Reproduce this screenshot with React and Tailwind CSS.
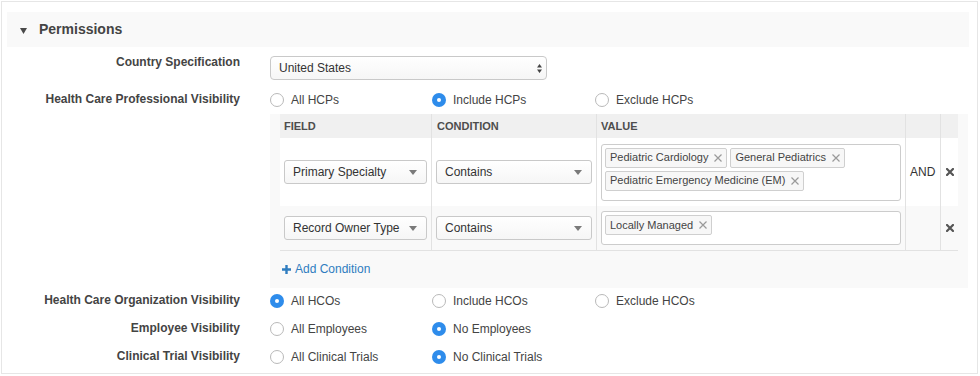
import React from "react";

const font = { fontFamily: '"Liberation Sans", Arial, Helvetica, sans-serif' };

function Radio({ checked, label, w }) {
  return (
    <div className={"flex items-center " + w}>
      {checked ? (
        <span className="w-[14px] h-[14px] rounded-full bg-[#2e8ceb] flex items-center justify-center shrink-0">
          <span className="w-[4px] h-[4px] rounded-full bg-white" />
        </span>
      ) : (
        <span className="w-[14px] h-[14px] rounded-full border border-[#b9b9b9] bg-white shrink-0" />
      )}
      <span className="ml-[7px] text-[12px] leading-[14px] text-[#444]">{label}</span>
    </div>
  );
}

function Label({ children, extra }) {
  return (
    <div className={"w-[238px] shrink-0 text-right text-[12px] leading-[14px] font-bold text-[#444] " + (extra || "")}>
      {children}
    </div>
  );
}

function Caret() {
  return (
    <svg width="8" height="5" viewBox="0 0 8 5" className="shrink-0">
      <path d="M0 0 L8 0 L4 5 Z" fill="#7a7a7a" />
    </svg>
  );
}

function Select({ text, w }) {
  return (
    <div className={"h-[24px] border border-[#c9c9c9] rounded-[3px] bg-linear-to-b from-white to-[#f6f6f6] flex items-center justify-between pl-[8px] pr-[9px] text-[12px] text-[#333] " + w}>
      <span>{text}</span>
      <Caret />
    </div>
  );
}

function Tag({ text }) {
  return (
    <div className="h-[20px] border border-[#cfcfcf] rounded-[2px] bg-[#f7f7f7] flex items-center pl-[4px] pr-[4px] text-[11px] text-[#444]">
      <span>{text}</span>
      <svg width="8" height="8" viewBox="0 0 8 8" className="ml-[6px]">
        <path d="M0.5 0.5 L7.5 7.5 M7.5 0.5 L0.5 7.5" stroke="#9a9a9a" strokeWidth="1.2" />
      </svg>
    </div>
  );
}

function HeavyX() {
  return (
    <svg width="8" height="8" viewBox="0 0 8 8">
      <path d="M1 1 L7 7 M7 1 L1 7" stroke="#555" strokeWidth="2.2" strokeLinecap="square" />
    </svg>
  );
}

export default function App() {
  return (
    <div className="w-[980px] h-[376px] bg-white pl-[1px] pt-[1px]" style={font}>
      <div className="w-[977px] h-[373px] border border-[#e6e6e6] flex flex-col">
        {/* header */}
        <div className="mt-[10px] ml-[5px] w-[962px] h-[35px] bg-[#f9f9f9] flex items-center pl-[13px]">
          <svg width="7" height="6" viewBox="0 0 7 6" className="mt-[3px]">
            <path d="M0 0 L7 0 L3.5 6 Z" fill="#4a4a4a" />
          </svg>
          <span className="ml-[12px] text-[14px] font-bold text-[#444]">Permissions</span>
        </div>

        {/* Country */}
        <div className="mt-[8px] flex items-start">
          <Label>Country Specification</Label>
          <div className="ml-[30px] mt-[1px] w-[277px] h-[24px] border border-[#c9c9c9] rounded-[4px] bg-linear-to-b from-white to-[#f6f6f6] flex items-center justify-between pl-[8px] pr-[4px] text-[12px] text-[#333]">
            <span>United States</span>
            <svg width="5" height="9" viewBox="0 0 5 9">
              <path d="M0 3.5 L5 3.5 L2.5 0 Z M0 5.5 L5 5.5 L2.5 9 Z" fill="#444" />
            </svg>
          </div>
        </div>

        {/* HCP */}
        <div className="mt-[11px] h-[18px] flex items-center">
          <Label extra="mb-[2px]">Health Care Professional Visibility</Label>
          <div className="ml-[30px] flex">
            <Radio label="All HCPs" w="w-[162px]" />
            <Radio checked label="Include HCPs" w="w-[163px]" />
            <Radio label="Exclude HCPs" w="w-[150px]" />
          </div>
        </div>

        {/* table container */}
        <div className="mt-[5px] ml-[268px] w-[698px] h-[174px] bg-[#f9f9f9] px-[10px] flex flex-col">
          <div className="grid grid-cols-[151px_165px_309px_35px_18px] text-[11px] font-bold text-[#4d4d4d] bg-[#f0f0f0] h-[24px]">
            <div className="flex items-center pl-[4px]">FIELD</div>
            <div className="flex items-center pl-[5px] border-l border-[#e2e2e2]">CONDITION</div>
            <div className="flex items-center pl-[4px] border-l border-[#e2e2e2]">VALUE</div>
            <div className="border-l border-[#e2e2e2]" />
            <div className="border-l border-[#e2e2e2]" />
          </div>
          <div className="grid grid-cols-[151px_165px_309px_35px_18px] bg-white h-[68px]">
            <div className="flex items-center pl-[4px]">
              <Select text="Primary Specialty" w="w-[143px]" />
            </div>
            <div className="flex items-center pl-[4px] border-l border-[#e2e2e2]">
              <Select text="Contains" w="w-[156px]" />
            </div>
            <div className="flex items-center pl-[4px] border-l border-[#e2e2e2]">
              <div className="w-[300px] border border-[#cccccc] rounded-[3px] bg-white pt-[3px] pb-[9px] px-[3px] flex flex-wrap gap-x-[3px] gap-y-[3px]">
                <Tag text="Pediatric Cardiology" />
                <Tag text="General Pediatrics" />
                <Tag text="Pediatric Emergency Medicine (EM)" />
              </div>
            </div>
            <div className="flex items-center pl-[4px] border-l border-[#e2e2e2] text-[12px] text-[#333]">AND</div>
            <div className="flex items-center justify-center border-l border-[#e2e2e2]">
              <HeavyX />
            </div>
          </div>
          <div className="grid grid-cols-[151px_165px_309px_35px_18px] h-[45px] border-b border-[#e2e2e2]">
            <div className="flex items-center pl-[4px]">
              <Select text="Record Owner Type" w="w-[143px]" />
            </div>
            <div className="flex items-center pl-[4px] border-l border-[#e2e2e2]">
              <Select text="Contains" w="w-[156px]" />
            </div>
            <div className="flex items-center pl-[4px] border-l border-[#e2e2e2]">
              <div className="w-[300px] border border-[#cccccc] rounded-[3px] bg-white pt-[3px] pb-[9px] px-[3px] flex flex-wrap gap-x-[3px] gap-y-[3px]">
                <Tag text="Locally Managed" />
              </div>
            </div>
            <div className="border-l border-[#e2e2e2]" />
            <div className="flex items-center justify-center border-l border-[#e2e2e2]">
              <HeavyX />
            </div>
          </div>
          <div className="pt-[11px] pl-[2px] flex items-center text-[12px] leading-[14px] text-[#2f7dc0]">
            <svg width="9" height="9" viewBox="0 0 9 9">
              <path d="M4.5 0 V9 M0 4.5 H9" stroke="#2f7dc0" strokeWidth="2.4" />
            </svg>
            <span className="ml-[4px]">Add Condition</span>
          </div>
        </div>

        {/* HCO */}
        <div className="mt-[4px] h-[18px] flex items-center">
          <Label extra="mb-[2px]">Health Care Organization Visibility</Label>
          <div className="ml-[30px] flex">
            <Radio checked label="All HCOs" w="w-[162px]" />
            <Radio label="Include HCOs" w="w-[163px]" />
            <Radio label="Exclude HCOs" w="w-[150px]" />
          </div>
        </div>

        {/* Employee */}
        <div className="mt-[10px] h-[18px] flex items-center">
          <Label extra="mb-[2px]">Employee Visibility</Label>
          <div className="ml-[30px] flex">
            <Radio label="All Employees" w="w-[162px]" />
            <Radio checked label="No Employees" w="w-[163px]" />
          </div>
        </div>

        {/* Clinical */}
        <div className="mt-[10px] h-[18px] flex items-center">
          <Label extra="mb-[2px]">Clinical Trial Visibility</Label>
          <div className="ml-[30px] flex">
            <Radio label="All Clinical Trials" w="w-[162px]" />
            <Radio checked label="No Clinical Trials" w="w-[163px]" />
          </div>
        </div>
      </div>
    </div>
  );
}
